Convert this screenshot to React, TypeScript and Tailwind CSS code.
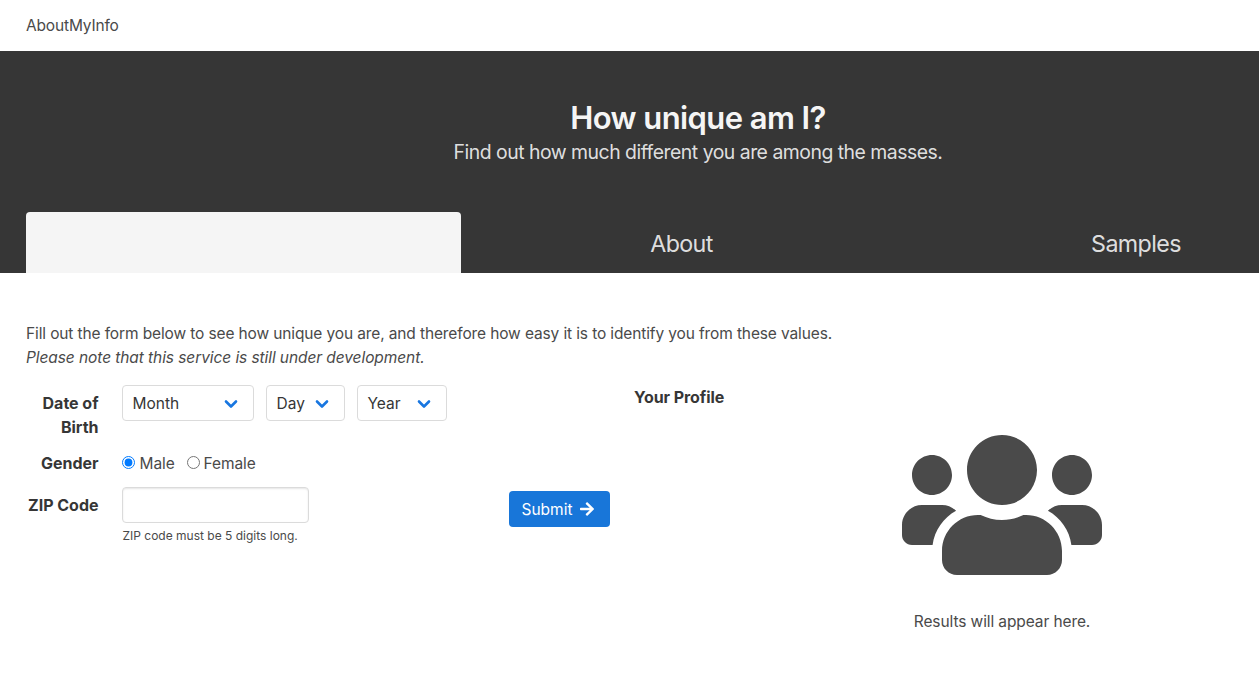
import { FaUsers, FaArrowRight } from "react-icons/fa";

function Select({ label, className }: { label: string; className: string }) {
  return (
    <div className={`flex h-9 items-center justify-between rounded border border-[#dbdbdb] bg-white pl-[9.5px] pr-[15px] text-[15.5px] tracking-[0px] text-[#363636] ${className}`}>
      <span className="pt-[2px]">{label}</span>
      <svg className="mt-px" width="14" height="10" viewBox="0 0 14 10" fill="none" stroke="#1876e0" strokeWidth="2.6" strokeLinecap="round" strokeLinejoin="round">
        <path d="M2 2.5l5 5 5-5" />
      </svg>
    </div>
  );
}

function Label({ children, className }: { children: string; className: string }) {
  return <div className={`w-[73px] shrink-0 pr-[0.5px] text-right font-bold tracking-[-0.02px] text-[#363636] ${className}`}>{children}</div>;
}

export default function App() {
  return (
    <div className="h-[685px] w-[1259px] overflow-hidden bg-white font-['Inter',sans-serif] text-base leading-6 text-[#4a4a4a]">
      <nav className="flex h-[51px] items-center px-[26px] text-[15.5px] tracking-[-0.16px]">AboutMyInfo</nav>
      <header className="flex h-[222px] flex-col justify-between bg-[#363636]">
        <div className="ml-[137px] pt-[49px] text-center">
          <h1 className="text-[31px] font-semibold leading-9 tracking-[-0.58px] text-[#f5f5f5]">How unique am I?</h1>
          <p className="mt-1 text-[19.4px] leading-[25px] tracking-[-0.49px] text-[#f5f5f5e6]">Find out how much different you are among the masses.</p>
        </div>
        <div className="flex h-[61px] overflow-hidden pl-[26px] text-[23.25px] tracking-[-0.6px] text-[#f5f5f5e6]">
          <div className="w-[435px] shrink-0 rounded-t bg-[#f5f5f5]" />
          <div className="flex w-[441px] shrink-0 items-center justify-center pt-[3px]">About</div>
          <div className="flex w-[468px] shrink-0 items-center justify-center pt-[3px]">Samples</div>
        </div>
      </header>
      <main className="px-[26px] pt-[49px]">
        <p className="text-[15.5px] tracking-[-0.125px]">Fill out the form below to see how unique you are, and therefore how easy it is to identify you from these values.</p>
        <p className="text-[15.5px] italic tracking-[-0.08px]">Please note that this service is still under development.</p>
        <div className="mt-[15px] flex">
          <form className="w-[584px]">
            <div className="flex">
              <Label className="pt-[6px]">Date of Birth</Label>
              <div className="ml-[23px] flex gap-3">
                <Select label="Month" className="w-[132px]" />
                <Select label="Day" className="w-[79px]" />
                <Select label="Year" className="w-[90px]" />
              </div>
            </div>
            <div className="mt-3 flex">
              <Label className="">Gender</Label>
              <div className="ml-[23px] flex h-6 text-[15.5px] tracking-[-0.1px]">
                <label className="flex items-center"><input type="radio" name="gender" defaultChecked className="mb-[2px] mr-[4.5px] h-[13px] w-[13px] accent-[#007aff]" /><span className="pt-[2px]">Male</span></label>
                <label className="ml-3 flex items-center"><input type="radio" name="gender" className="mb-[2px] mr-1 h-[13px] w-[13px]" /><span className="pt-[2px]">Female</span></label>
              </div>
            </div>
            <div className="mt-3 flex">
              <Label className="pt-[6px]">ZIP Code</Label>
              <div className="ml-[23px] w-[187px]">
                <input className="block h-9 w-full rounded border border-[#dbdbdb] shadow-[inset_0_1px_2px_rgba(10,10,10,0.1)]" />
                <p className="ml-[0.5px] mt-1 text-xs leading-[18px]">ZIP code must be 5 digits long.</p>
              </div>
              <button type="button" className="ml-[200px] mt-1 flex h-9 w-[101px] items-center rounded bg-[#1876d9] pl-[12.5px] text-[15.5px] text-white">
                <span className="pt-[2px]">Submit</span> <FaArrowRight size={16} className="ml-[6.5px]" />
              </button>
            </div>
          </form>
          <section className="flex-1 pl-6">
            <h2 className="font-bold tracking-[-0.06px] text-[#363636]">Your Profile</h2>
            <div className="ml-[268px] mt-[6px] flex w-[200px] flex-col items-center">
              <FaUsers size={200} className="h-[180px] w-[200px]" />
              <p className="mt-[15px] whitespace-nowrap text-[15.5px] tracking-[-0.1px]">Results will appear here.</p>
            </div>
          </section>
        </div>
      </main>
    </div>
  );
}
